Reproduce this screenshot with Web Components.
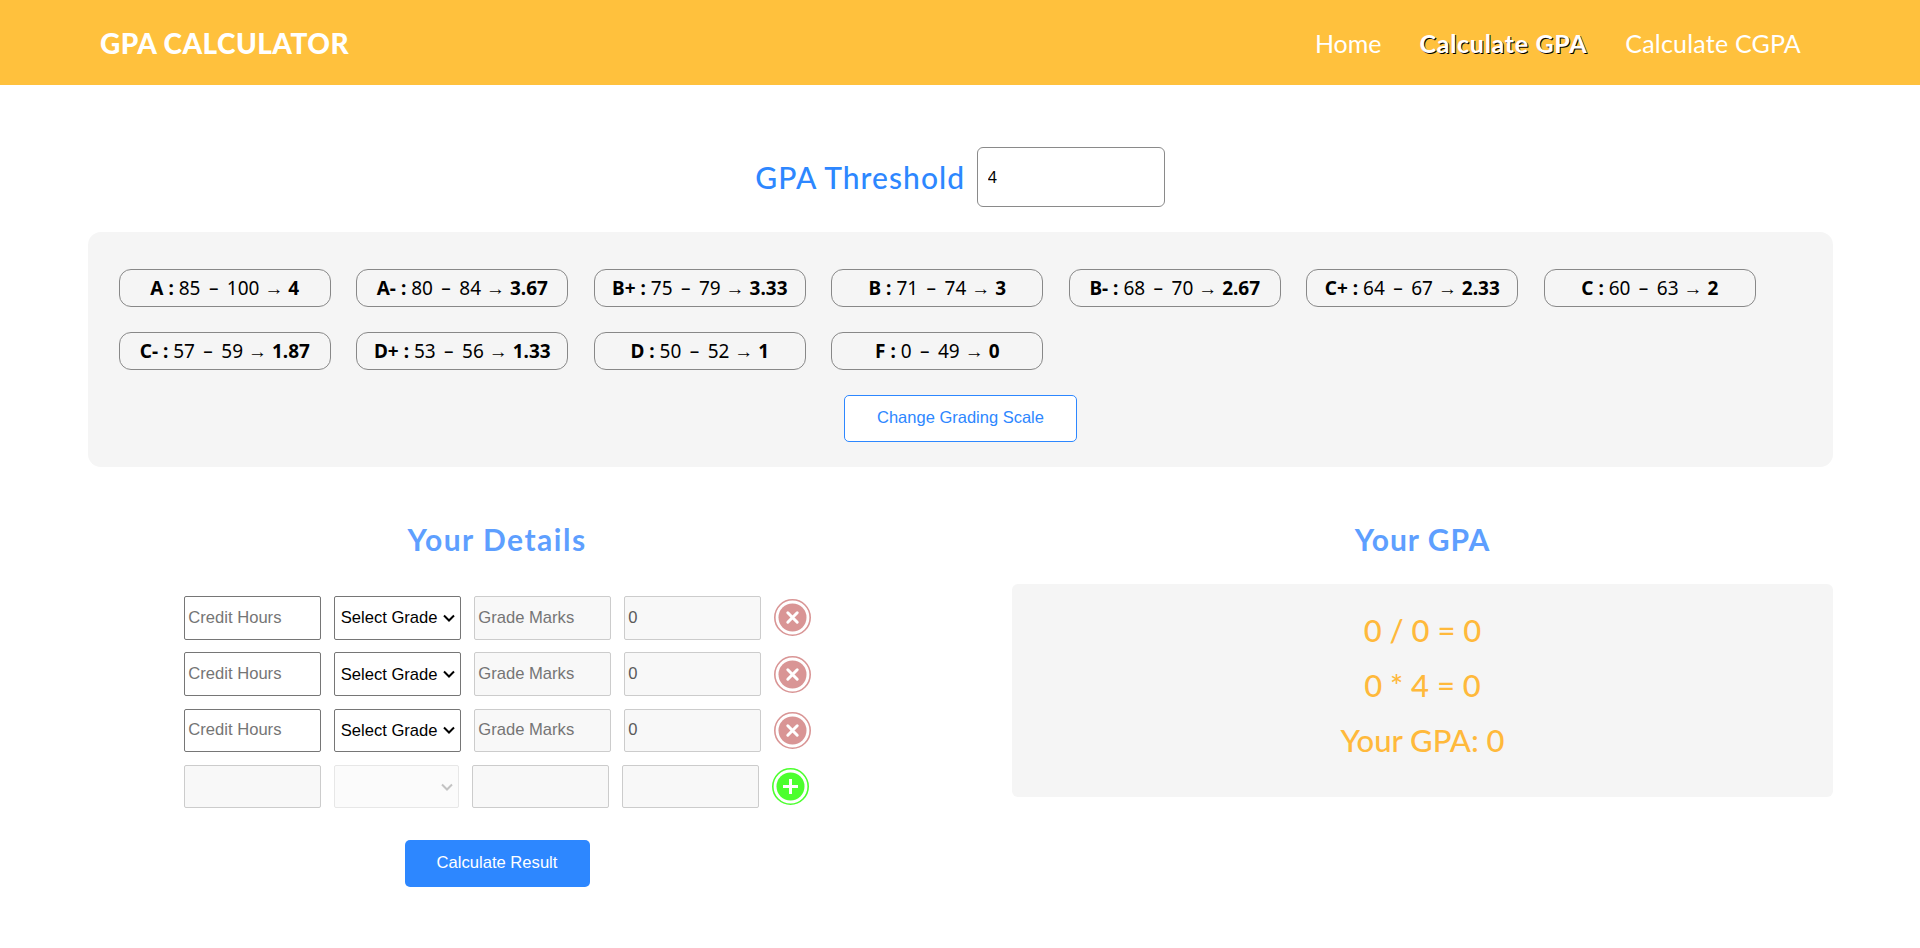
<!DOCTYPE html>
<html lang="en">
<head>
<meta charset="utf-8">
<title>GPA Calculator</title>
<style>
html,body{margin:0;padding:0;background:#fff;}
body{font-family:"Lato","Noto Sans",sans-serif;}
</style>
</head>
<body>
<gpa-app></gpa-app>
<script>
const COMIC='"Lato","Noto Sans",sans-serif';
const chev=c=>`url("data:image/svg+xml,%3Csvg xmlns='http://www.w3.org/2000/svg' width='12' height='8'%3E%3Cpath d='M1 1.5L6 6.5L11 1.5' fill='none' stroke='%23${c}' stroke-width='2'/%3E%3C/svg%3E")`;
function def(name,css,html){
  customElements.define(name,class extends HTMLElement{
    constructor(){super();const r=this.attachShadow({mode:'open'});r.innerHTML='<style>'+css+'</style>'+(typeof html==='function'?html(this):html);}
  });
}
def('site-header',`
:host{display:flex;align-items:center;justify-content:space-between;height:85px;background:#ffc13d;padding:0 119px 0 100px;box-sizing:border-box;color:#fff;font-family:${COMIC};}
.brand{font-size:28px;font-weight:900;letter-spacing:.45px;}
nav{display:flex;gap:38px;font-size:25px;}
.active{text-shadow:1px 1px 0 #000;font-weight:700;letter-spacing:.7px;}
.last{letter-spacing:.2px;}
`,`<div class="brand">GPA CALCULATOR</div><nav><span>Home</span><span class="active">Calculate GPA</span><span class="last">Calculate CGPA</span></nav>`);

def('threshold-field',`
:host{display:flex;justify-content:center;align-items:center;gap:11.5px;margin-top:62px;font-family:${COMIC};color:#2d87ff;font-size:30px;}
label{letter-spacing:1.05px;font-weight:500;}
input{width:188px;height:60px;box-sizing:border-box;border:1px solid #8a8a8a;border-radius:6px;padding:0 10px;font:16px "Noto Sans",sans-serif;color:#000;background:#fff;outline:none;}
`,`<label>GPA Threshold</label><input value="4">`);

def('grade-pill',`
:host{display:flex;align-items:center;justify-content:center;height:37.5px;box-sizing:border-box;border:1px solid #888;border-radius:12px;font:19px "Noto Sans",sans-serif;color:#000;white-space:pre;}
b{font-weight:700;}
.r{word-spacing:3.5px;}
`,h=>`<b>${h.getAttribute('g')} : </b><span class="r">${h.getAttribute('r')}</span> → <b>${h.getAttribute('p')}</b>`);

def('scale-panel',`
:host{display:block;margin:25px 87px 0 88px;background:#f5f5f5;border-radius:13px;padding:37.3px 30.8px 25px;height:235px;box-sizing:border-box;}
.grid{display:grid;grid-template-columns:repeat(7,212px);gap:25.5px 25.5px;}
.act{display:flex;justify-content:center;margin-top:25.5px;}
button{width:233.5px;height:47px;border:1px solid #2d87ff;border-radius:5px;background:#fff;color:#2d87ff;font:16.5px "Liberation Sans",Arial,sans-serif;padding:0 0 2px;}
`,`<div class="grid"><slot></slot></div><div class="act"><button>Change Grading Scale</button></div>`);

def('round-icon',`
:host{display:block;width:37px;height:37px;flex:none;}
svg{display:block;}
`,h=>{
  const add=h.getAttribute('kind')==='add';
  const c=add?'#4cff2e':'#d99595';
  const g=add?'<path d="M18.5 11V26M11 18.5H26"/>':'<path d="M13.8 13.8L23.2 23.2M23.2 13.8L13.8 23.2"/>';
  return `<svg width="37" height="37" viewBox="0 0 37 37"><circle cx="18.5" cy="18.5" r="17.7" fill="none" stroke="${c}" stroke-width="1.6"/><circle cx="18.5" cy="18.5" r="14" fill="${c}"/><g fill="none" stroke="#fff" stroke-width="3" stroke-linecap="${add?'butt':'round'}">${g}</g></svg>`;
});

def('course-row',`
:host{display:flex;gap:13px;align-items:center;height:43.5px;font:16.6px "Liberation Sans",Arial,sans-serif;}
input,select{box-sizing:border-box;height:100%;width:137px;border:1px solid #767676;border-radius:2px;padding:0 3px;font:inherit;background:#fff;color:#000;outline:none;margin:0;}
select{appearance:none;-webkit-appearance:none;width:127px;padding:0 0 0 5.4px;background:#fff ${chev('000')} no-repeat right 5px center;}
input[disabled]{background:#f8f8f8;border-color:#ccc;color:#5a5a5a;}
select[disabled]{width:125px;background:#fafafa ${chev('aaa')} no-repeat right 5px center;border-color:#ddd;}
input::placeholder{color:#757575;opacity:1;}
`,h=>{
  const off=h.hasAttribute('blank');
  return off?`<input disabled><select disabled></select><input disabled><input disabled><round-icon kind="add"></round-icon>`
  :`<input placeholder="Credit Hours"><select><option>Select Grade</option></select><input disabled placeholder="Grade Marks"><input disabled value="0"><round-icon kind="del"></round-icon>`;
});

def('details-column',`
:host{display:block;font-family:${COMIC};}
h2{margin:0 0 35.2px;height:44px;line-height:44px;text-align:center;font-size:30px;font-weight:700;color:#5e9fff;letter-spacing:1.5px;}
.rows{display:flex;flex-direction:column;gap:12.77px;align-items:flex-start;padding-left:96.3px;}
.act{display:flex;justify-content:center;margin-top:31.5px;}
button{width:185px;height:46.7px;border:0;border-radius:5px;background:#2d87ff;color:#fff;font:16.6px "Liberation Sans",Arial,sans-serif;}
`,`<h2>Your Details</h2><div class="rows"><slot></slot></div><div class="act"><button>Calculate Result</button></div>`);

def('result-column',`
:host{display:block;font-family:${COMIC};}
h2{margin:0 0 23px;height:44px;line-height:44px;text-align:center;font-size:30px;font-weight:700;color:#5e9fff;letter-spacing:1px;}
.box{background:#f5f5f5;border-radius:6px;height:212.7px;box-sizing:border-box;padding-top:19.4px;text-align:center;color:#ffb93b;font-size:31px;font-weight:500;line-height:54.7px;}
`,`<h2>Your GPA</h2><div class="box"><div>0 / 0 = 0</div><div>0 * 4 = 0</div><div>Your GPA: 0</div></div>`);

def('gpa-app',`
:host{display:block;}
.cols{display:grid;grid-template-columns:818px 1fr;column-gap:106px;margin:50px 87px 0 88px;}
`,`<site-header></site-header><threshold-field></threshold-field>
<scale-panel>
<grade-pill g="A" r="85 – 100" p="4"></grade-pill>
<grade-pill g="A-" r="80 – 84" p="3.67"></grade-pill>
<grade-pill g="B+" r="75 – 79" p="3.33"></grade-pill>
<grade-pill g="B" r="71 – 74" p="3"></grade-pill>
<grade-pill g="B-" r="68 – 70" p="2.67"></grade-pill>
<grade-pill g="C+" r="64 – 67" p="2.33"></grade-pill>
<grade-pill g="C" r="60 – 63" p="2"></grade-pill>
<grade-pill g="C-" r="57 – 59" p="1.87"></grade-pill>
<grade-pill g="D+" r="53 – 56" p="1.33"></grade-pill>
<grade-pill g="D" r="50 – 52" p="1"></grade-pill>
<grade-pill g="F" r="0 – 49" p="0"></grade-pill>
</scale-panel>
<div class="cols">
<details-column><course-row></course-row><course-row></course-row><course-row></course-row><course-row blank></course-row></details-column>
<result-column></result-column>
</div>`);
</script>
</body>
</html>
